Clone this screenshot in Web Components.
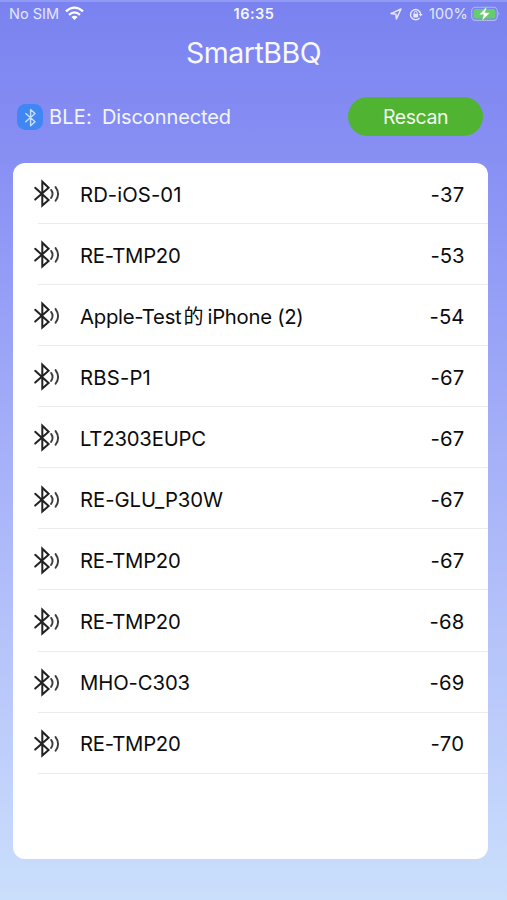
<!DOCTYPE html>
<html lang="en">
<head>
<meta charset="utf-8">
<title>SmartBBQ</title>
<style>
html, body { margin: 0; height: 100%; }
body { font-family: Inter, "Noto Sans CJK SC", sans-serif; overflow: hidden; }
</style>
</head>
<body>
<bbq-app></bbq-app>
<script>
const define = (name, html, setup) => customElements.define(name, class extends HTMLElement {
  connectedCallback() {
    if (this.shadowRoot) return;
    const root = this.attachShadow({ mode: 'open' });
    const t = document.createElement('template');
    t.innerHTML = html.trim();
    root.append(t.content.cloneNode(true));
    if (setup) setup(this, root);
  }
});

/* Text line whose tracking is adjusted so it spans the width given in "fit". */
define('fit-text', `<style>:host{display:block}span{display:inline-block;white-space:pre;vertical-align:top}</style><span></span>`,
(el, root) => {
  const s = root.querySelector('span'), text = el.getAttribute('text');
  s.textContent = text;
  const want = parseFloat(el.getAttribute('fit'));
  if (want) {
    const n = text.length, gap = (want - s.getBoundingClientRect().width) / n;
    s.style.letterSpacing = gap.toFixed(3) + 'px';
  }
});

define('signal-icon', `
<style>:host{display:block;width:27px;height:30px}svg{display:block}</style>
<svg width="27" height="30" viewBox="0 0 27 30" fill="none" stroke="#222" stroke-width="2" stroke-linejoin="miter" stroke-linecap="round">
<path d="M2.2 8.8L15.6 21L9.3 26.6V2.7L15.6 8.8L2.2 20.6"/>
<path d="M18.1 10.9Q21 14.9 18.1 18.9M22.6 8.1Q27.6 14.9 22.6 21.7" stroke="#3c3c3c" stroke-width="1.9"/>
</svg>`);

define('ble-badge', `
<style>:host{display:block;width:26px;height:26px;border-radius:8.5px;background:#4187f3}svg{display:block}</style>
<svg width="26" height="26" viewBox="0 0 26 26" fill="none" stroke="#c9defd" stroke-width="1.4" stroke-linejoin="round" stroke-linecap="round">
<path d="M8.8 9.6L18 17.8L13.6 21.8V5.6L18 9.6L8.8 17.8"/></svg>`);

define('status-bar', `
<style>
:host{display:grid;grid-template-columns:1fr auto 1fr;align-items:center;height:27px;color:#e4e7ff;font-size:14.5px;line-height:20px;box-sizing:border-box;padding:1px 6px 0 9px}
.l,.r{display:flex;align-items:center}.l{gap:6px}.r{justify-content:flex-end}
.time{font-weight:600;color:#f5f6ff;margin-right:2px}
svg{display:block}.l svg{margin-top:-2px}.loc{margin-right:7px}.lock{margin-right:6px}.bat{margin-left:3px;margin-top:-1px}
</style>
<div class="l"><fit-text text="No SIM" fit="50"></fit-text>
<svg width="19" height="15" viewBox="0 0 19 15" fill="none" stroke="#fff" stroke-width="2.3"><path d="M1 5.4Q9.5 -2.2 18 5.4M4 8.8Q9.5 3.9 15 8.8"/><path d="M9.5 14L6.4 10.9Q9.5 8.5 12.6 10.9Z" fill="#fff" stroke="none"/></svg></div>
<fit-text class="time" text="16:35" fit="41"></fit-text>
<div class="r">
<svg class="loc" width="12" height="12" viewBox="0 0 12 12" fill="none" stroke="#e4e7ff" stroke-width="1.5" stroke-linejoin="round"><path d="M1 5.6L11 1L6.4 11L5.9 6.2Z"/></svg>
<svg class="lock" width="14" height="13" viewBox="0 0 14 13" fill="none" stroke="#e4e7ff" stroke-width="1.4"><path d="M10.6 9.9A5.1 5.1 0 1 1 11.7 6.2"/><path d="M9.7 5.9H13.7L11.7 8.6Z" fill="#e4e7ff" stroke="none"/><path d="M5.2 6V4.8a1.5 1.5 0 0 1 3 0V6" stroke-width="1"/><rect x="4.3" y="5.8" width="4.8" height="3.6" rx=".6" fill="#e4e7ff" stroke="none"/></svg>
<fit-text text="100%" fit="39"></fit-text>
<svg class="bat" width="30" height="16" viewBox="0 0 30 16"><rect x=".7" y="1.2" width="25.6" height="13.2" rx="3.8" fill="none" stroke="#b0b5f7" stroke-width="1.1"/><rect x="2.5" y="3" width="22" height="9.6" rx="2.2" fill="#65cd6b"/><path d="M27.5 5.8Q29.4 7.8 27.5 9.8Z" fill="#b0b5f7"/><path d="M15.8 .6L8 8.8H12.6L10.8 15L19 6.8H14.3Z" fill="#fff" stroke="#65cd6b" stroke-width=".5"/></svg>
</div>`);

define('rescan-button', `
<style>:host{display:block}button{display:flex;align-items:center;justify-content:center;width:135px;height:39px;border:0;border-radius:20px;background:#51b332;color:#f0faed;font:400 19.5px/28px Inter,sans-serif;padding:1px 0 0}</style>
<button><slot></slot></button>`);

define('device-row', `
<style>
:host{display:flex;align-items:center;height:61.1px;box-sizing:border-box;padding:1px 23px 0 20px;color:#0c0c0c;font-size:20.3px;line-height:28px;background:linear-gradient(#ebebed,#ebebed) 25px 100%/100% 1.2px no-repeat}
.name{display:flex;margin-left:20px;flex:1}
.name,::slotted([slot=rssi]){padding-top:1px}
</style>
<signal-icon></signal-icon><span class="name"><slot></slot></span><slot name="rssi"></slot>`);

define('device-list', `
<style>:host{display:block;background:#fff;border-radius:12px;overflow:hidden;box-sizing:border-box}</style><slot></slot>`);

const devices = [
  [[['RD-iOS-01', 101.5]], '-37', 34],
  [[['RE-TMP20', 100.5]], '-53', 34],
  [[['Apple-Test', 101.5], ['的', 24], ['iPhone (2)', 96]], '-54', 35],
  [[['RBS-P1', 71]], '-67', 34],
  [[['LT2303EUPC', 126]], '-67', 34],
  [[['RE-GLU_P30W', 143]], '-67', 34],
  [[['RE-TMP20', 100.5]], '-67', 34],
  [[['RE-TMP20', 100.5]], '-68', 35],
  [[['MHO-C303', 110]], '-69', 35],
  [[['RE-TMP20', 100.5]], '-70', 34]
];
const rows = devices.map(([parts, rssi, w]) => `<device-row>${parts.map(([t, f]) =>
  `<fit-text text="${t}" fit="${f}"${t === '的' ? ' class="han"' : ''}></fit-text>`).join('')}<fit-text slot="rssi" text="${rssi}" fit="${w}"></fit-text></device-row>`).join('');

define('bbq-app', `
<style>
:host{display:flex;flex-direction:column;height:900px;width:507px;box-sizing:border-box;background:linear-gradient(#9099f4 0 2px,transparent 2px),linear-gradient(#7a82f0 0%,#8890f4 18%,#a5b0f8 50%,#bfcffb 84%,#cadffb 100%);color:#f3f5ff}
h1{margin:0;height:52px;display:flex;align-items:center;justify-content:center;font-size:28.5px;font-weight:400;line-height:36px;color:#f8f9ff}
.bar{display:flex;align-items:center;height:39px;margin:18px 24px 0 17px}
.state{margin-left:6px;flex:1;font-size:20px;line-height:28px;display:flex;gap:10px;padding-top:1px}
device-list{margin:27px 19.5px 0 13px;height:696px}
.han{margin-left:2px;font-size:20px}
</style>
<status-bar></status-bar>
<h1><fit-text text="SmartBBQ" fit="135"></fit-text></h1>
<div class="bar"><ble-badge></ble-badge><div class="state"><fit-text text="BLE:" fit="43"></fit-text><fit-text text="Disconnected" fit="129"></fit-text></div><rescan-button><fit-text text="Rescan" fit="65"></fit-text></rescan-button></div>
<device-list>${rows}</device-list>`);
</script>
</body>
</html>
